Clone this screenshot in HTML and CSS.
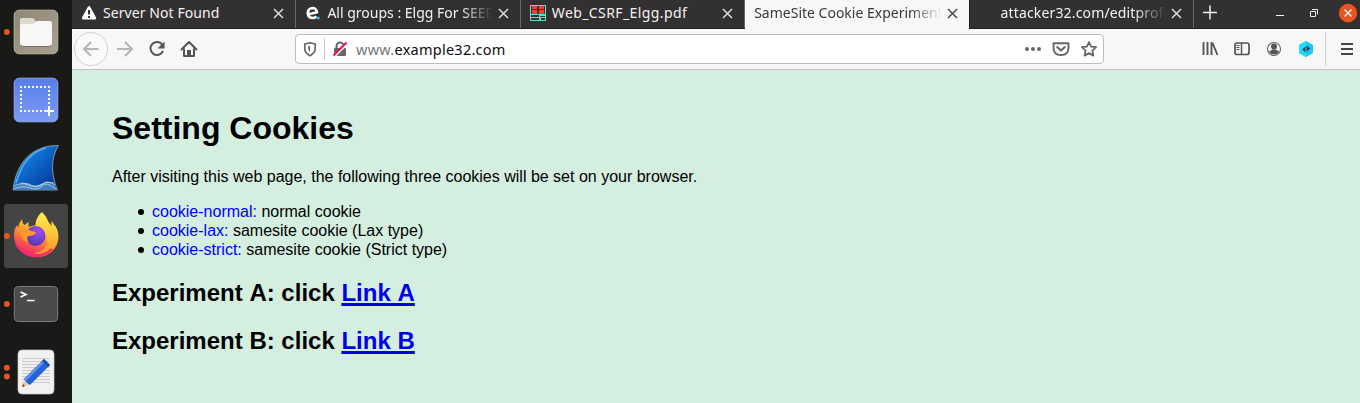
FILE: index.html
```html
<!DOCTYPE html>
<html lang="en">
<head>
<meta charset="utf-8">
<title>SameSite Cookie Experiment</title>
<link rel="stylesheet" href="styles.css">
</head>
<body>
<div class="desktop">
  <nav class="dock">
    <div class="app"><svg viewBox="0 0 64 64">
      <defs><linearGradient id="files" x1="0" y1="0" x2="1" y2="1"><stop offset="0" stop-color="#8f8776"/><stop offset="1" stop-color="#aaa290"/></linearGradient></defs>
      <rect x="10.2" y="10.2" width="43.6" height="43.6" rx="5" fill="url(#files)" stroke="#b9b4a6"/>
      <path d="M16 30V20q0-2 2-2h10q2 0 2.500 1.500l1 2H40v8z" fill="#dedad0"/>
      <path d="M16 26q0-2 2-2h10q2 0 3-1.500t3-1.500h12q2 0 2 2v20q0 3-3 3H19q-3 0-3-3z" fill="#f8f7f5"/>
      <path d="M17 45.500q1 1 2 1h26q1 0 2-1" fill="none" stroke="#777062"/>
      <circle cx="2.800" cy="32" r="3" fill="#e95420"/>
    </svg></div>
    <div class="app"><svg viewBox="0 0 64 64">
      <defs><linearGradient id="shot" x1="0" y1="0" x2="0" y2="1"><stop offset="0" stop-color="#587fe8"/><stop offset="1" stop-color="#7c9cf6"/></linearGradient></defs>
      <rect x="10.200" y="10.200" width="43.600" height="43.600" rx="5" fill="url(#shot)" stroke="#91a9ee"/>
      <path d="M16 19h30M17 22v22M16 43h24M45 22v16" fill="none" stroke="#fff" stroke-width="2" stroke-dasharray="2 2"/>
      <path d="M45 38v10M40 43h10" stroke="#fff" stroke-width="2"/>
    </svg></div>
    <div class="app"><svg viewBox="0 0 64 64">
      <defs><linearGradient id="fin" x1="0" y1="0" x2="1" y2="1"><stop offset=".2" stop-color="#1383e6"/><stop offset=".85" stop-color="#063b9b"/></linearGradient></defs>
      <path d="M9 54C12 27 28 9 54.500 9.500 47 21 46.500 38 53.500 54z" fill="url(#fin)" stroke="#92a9bd" stroke-width=".8"/>
      <path d="M12 47C17 29 26 16 42 12" fill="none" stroke="#54a9f4" stroke-width="1.600"/>
      <path d="M10 50q7-5 14-2t14 0 13 1l2 5H9z" fill="#427dbf"/>
      <path d="M10 50q7-4 14-1t14-1 13 1M10 53q8-4 16-1t12-2 14 3M17 47q8 0 12 3t13-4l8 1" fill="none" stroke="#bbd7ef" stroke-width=".8"/>
    </svg></div>
    <div class="app current"><svg viewBox="0 0 64 64">
      <defs>
        <linearGradient id="flame" x1=".8" y1="0" x2=".3" y2="1"><stop offset="0" stop-color="#fff44f"/><stop offset=".35" stop-color="#ffb42a"/><stop offset=".65" stop-color="#ff6540"/><stop offset="1" stop-color="#e8177d"/></linearGradient>
        <radialGradient id="globe" cx=".65" cy=".25" r=".8"><stop offset="0" stop-color="#a14df0"/><stop offset="1" stop-color="#5137ad"/></radialGradient>
        <linearGradient id="tail" x1=".5" y1="0" x2=".5" y2="1"><stop offset="0" stop-color="#fff150"/><stop offset="1" stop-color="#ff9528"/></linearGradient>
      </defs>
      <path d="M18.500 15q-1 4 2 6l4-3v5q10-4 15 1l12-2c8 14-1 31.500-19.500 31.500C20 53.500 10 44 10 31c0-4 1-7 3-10l1 3q1-6 4.500-9z" fill="url(#flame)"/>
      <path d="M38 8q5 5 6.500 10l3 4v-5c8 9 8 24-1 30-6 4-12 5-16 2 8-1 13-5 13-14-1-9-12-8-12-15 1-6 3-9 6.500-12z" fill="url(#tail)"/>
      <circle cx="31.500" cy="32" r="10" fill="url(#globe)"/>
      <path d="M16 27q7-4 11 0l5 1q-1 4-8 4-2 3 1 7-9-3-9-12z" fill="#ff9a2b"/>
      <path d="M12 40c7 13 25 15 36 5" fill="none" stroke="#f82a67" stroke-width="2"/>
      <circle cx="2.800" cy="32" r="3" fill="#e95420"/>
    </svg></div>
    <div class="app"><svg viewBox="0 0 64 64">
      <rect x="10.300" y="14.500" width="43.400" height="35" rx="4" fill="#4b4b4b" stroke="#797979"/>
      <path d="m16.500 20 5.500 2.500-5.500 2.500M23 28.500h7.500" fill="none" stroke="#fff" stroke-width="1.500"/>
      <circle cx="2.800" cy="32" r="3" fill="#e95420"/>
    </svg></div>
    <div class="app"><svg viewBox="0 0 64 64">
      <rect x="14" y="10" width="36" height="44" rx="4" fill="#f1f1f1" stroke="#c8c8c8" stroke-width=".7"/>
      <path d="M18 18.500h28M18 21.500h28M18 24.500h28M18 27.500h28M18 30.500h28M18 33.500h28M18 36.500h28M18 39.500h28M18 42.500h28" stroke="#cbcbcb"/>
      <path d="m18 47 2-7 5 5z" fill="#f3c9a7"/><path d="m18 47 1-3 2 2z" fill="#444"/>
      <path d="m20 39 20-20 6 6-20 20-3-2z" fill="#2763d7"/><path d="m20 39 20-20 2 2-20 20z" fill="#5b8df0"/><path d="m38 21 2-2 6 6-2 2z" fill="#194da8"/>
      <circle cx="2.800" cy="27.700" r="3" fill="#e95420"/><circle cx="2.800" cy="36.400" r="3" fill="#e95420"/>
    </svg></div>
  </nav>

  <div class="browser">
    <header class="tabbar">
      <div class="tab">
        <svg class="favicon" viewBox="0 0 16 16"><path d="M7 1.500q1-1 2 0l6 11q.5 2-1 2H2q-1.500 0-1-2z" fill="#fff"/><path d="M8 5v4.500M8 11v2" stroke="#333" stroke-width="2"/></svg>
        <span class="title t-server">Server Not Found</span>
        <svg class="close" viewBox="0 0 16 16"><path d="m4 4 9 9M13 4l-9 9"/></svg>
      </div>
      <div class="tab">
        <svg class="favicon" viewBox="0 0 16 16"><path d="M3.500 9.300 12 7.200Q11 3 7.500 3 3 3.500 2.800 8q.5 5 5 5 2 0 3.700-1.500" fill="none" stroke="#fff" stroke-width="2.700" stroke-linejoin="round"/><circle cx="13.300" cy="13" r="1.500" fill="#35b8e5"/></svg>
        <span class="title fade t-elgg">All groups : Elgg For SEED</span>
        <svg class="close" viewBox="0 0 16 16"><path d="m4 4 9 9M13 4l-9 9"/></svg>
      </div>
      <div class="tab">
        <svg class="favicon" viewBox="0 0 16 16"><path d="M0 0h16v16H0z" fill="#55e4c2"/><path d="M1 1h14v8H1zM1 10h8v2H1zM1 13h8v2H1z" fill="#393333"/><path d="M2 1h5v3H2zM9 1h5v3H9zM2 5h5v4H2zM9 5h5v4H9z" fill="#ef4132"/><path d="M10 11h5v1h-5zM11 13h4v2h-4z" fill="#333"/></svg>
        <span class="title t-pdf">Web_CSRF_Elgg.pdf</span>
        <svg class="close" viewBox="0 0 16 16"><path d="m4 4 9 9M13 4l-9 9"/></svg>
      </div>
      <div class="tab selected">
        <span class="title fade t-same">SameSite Cookie Experiment</span>
        <svg class="close" viewBox="0 0 16 16"><path d="m4 4 9 9M13 4l-9 9"/></svg>
      </div>
      <div class="tab">
        <span class="favicon"></span>
        <span class="title fade t-attack">attacker32.com/editprofile</span>
        <svg class="close" viewBox="0 0 16 16"><path d="m4 4 9 9M13 4l-9 9"/></svg>
      </div>
      <svg class="new-tab" viewBox="0 0 32 28"><path d="M9 12.500h14M16 5.500v14" stroke="#eee" stroke-width="1.500"/></svg>
      <svg class="window-controls" viewBox="0 0 100 28"><path d="M16 15.500h8" stroke="#fff"/><path d="M50.500 11.500h5v5h-5zM52 9.500h5.500v5" fill="none" stroke="#eee"/><circle cx="88" cy="13" r="9.200" fill="#e95420"/><path d="m84.500 9.500 7 7m0-7-7 7" stroke="#fff" stroke-width="1.400"/></svg>
    </header>

    <div class="toolbar">
      <div class="navigation">
        <svg class="back" viewBox="0 0 36 36"><circle cx="18" cy="18" r="16.500" fill="#fafafa" stroke="#d2d2d2"/><path d="M25.500 18H11m7-7-7 7 7 7" fill="none" stroke="#b5b5b5" stroke-width="2"/></svg>
        <svg class="nav-icon" viewBox="0 0 32 32"><path d="M8 16h15m-7-7 7 7-7 7" fill="none" stroke="#b5b5b5" stroke-width="2"/></svg>
        <svg class="nav-icon" viewBox="0 0 32 32"><path d="M21.500 12A6.500 6.500 0 1 0 22 18" fill="none" stroke="#555" stroke-width="2"/><path d="M23.500 8.500v7h-7z" fill="#555"/></svg>
        <svg class="nav-icon" viewBox="0 0 32 32"><path d="m8.500 16.500 7.500-7.500 7.500 7.500M11 16v7h10v-7" fill="none" stroke="#555" stroke-width="2" stroke-linecap="round" stroke-linejoin="round"/><path d="M14 23v-6h4v6z" fill="#555"/></svg>
      </div>
      <div class="address">
        <svg class="shield" viewBox="0 0 16 16"><path d="M8 1.700 13.200 3V8q0 3.800-5.200 6.700Q2.800 11.800 2.800 8V3z" fill="none" stroke="#666" stroke-width="1.700" stroke-linejoin="round"/><path d="M8 5v6q-2-1.500-2-4V5.500z" fill="#666"/></svg>
        <span class="address-rule"></span>
        <svg class="lock" viewBox="0 0 16 16"><path d="M4.500 7V5a3.500 3.500 0 0 1 7 0v2" fill="none" stroke="#666" stroke-width="2"/><rect x="2" y="7" width="12" height="8" rx="1" fill="#666"/><path d="M2.500 15.500 15.500 2.500" stroke="#fff" stroke-width="2"/><path d="M1.500 14.500 14.500 1.500" stroke="#f0134d" stroke-width="2"/></svg>
        <span class="url"><span class="subdomain">www.</span>example32.com</span>
        <svg class="action" viewBox="0 0 28 28"><circle cx="8" cy="14" r="2"/><circle cx="14" cy="14" r="2"/><circle cx="20" cy="14" r="2"/></svg>
        <svg class="action" viewBox="0 0 28 28"><path d="M6.500 8.200h15V13q0 7-7.500 7t-7.500-7z" fill="none" stroke="#666" stroke-width="1.900" stroke-linejoin="round"/><path d="m10.200 12 3.800 3.600 3.800-3.600" fill="none" stroke="#666" stroke-width="2" stroke-linecap="round" stroke-linejoin="round"/></svg>
        <svg class="action" viewBox="0 0 28 28"><path d="m14 7 2.100 4.600 5 .600-3.700 3.400 1 5-4.400-2.500-4.400 2.500 1-5L6.900 12.200l5-.600z" fill="none" stroke="#666" stroke-width="1.800" stroke-linejoin="round"/></svg>
      </div>
      <div class="tools">
        <svg class="nav-icon" viewBox="0 0 32 32"><path d="M9.500 9v13M13.500 9v13M17.500 9v13M18.500 10l5 12" stroke="#555" stroke-width="1.900"/></svg>
        <svg class="nav-icon" viewBox="0 0 32 32"><rect x="9" y="10" width="14" height="11.500" rx="2" fill="none" stroke="#555" stroke-width="1.700"/><path d="M15.500 10v12" stroke="#555" stroke-width="1.500"/><path d="M10.500 12.500h3m-3 2h3m-3 2h3" stroke="#555"/></svg>
        <svg class="nav-icon" viewBox="0 0 32 32"><circle cx="16" cy="16" r="6.500" fill="none" stroke="#666" stroke-width="1.100"/><circle cx="16" cy="13.500" r="3" fill="#555"/><path d="M11 18q2 0 3-1.500h4Q19 18 21 18q-1 3.500-5 3.500T11 18z" fill="#555"/></svg>
        <svg class="nav-icon" viewBox="0 0 32 32"><path d="m16 8 7 4v8l-7 4-7-4v-8z" fill="#17c9f5"/><path d="m9 12 7-4v16l-7-4z" fill="#26dcfa"/><path d="m12 16.500 3.500-3v6zM16.500 12.500l4 3-4 3z" fill="#26445c"/></svg>
        <span class="menu-rule"></span>
        <svg class="menu" viewBox="0 0 26 32"><path d="M7 11h12M7 16h12M7 21h12" stroke="#444" stroke-width="1.800"/></svg>
      </div>
    </div>

    <main class="page">
      <h1>Setting Cookies</h1>
      <p>After visiting this web page, the following three cookies will be set on your browser.</p>
      <ul>
        <li><span class="cookie">cookie-normal:</span> normal cookie</li>
        <li><span class="cookie">cookie-lax:</span> samesite cookie (Lax type)</li>
        <li><span class="cookie">cookie-strict:</span> samesite cookie (Strict type)</li>
      </ul>
      <h2>Experiment A: click <a href="#a">Link A</a></h2>
      <h2>Experiment B: click <a href="#b">Link B</a></h2>
    </main>
  </div>
</div>
</body>
</html>
```

FILE: styles.css
```css
* { box-sizing: border-box; }
body { margin: 0; overflow: hidden; font-family: "Liberation Sans", Arial, sans-serif; }
svg { display: block; flex: none; }
.desktop { display: flex; width: 1360px; height: 403px; overflow: hidden; }
.dock { display: flex; flex: none; flex-direction: column; gap: 4px; width: 72px; padding-left: 4px; background: #191917; }
.app { flex: none; width: 64px; height: 64px; border-radius: 3px; }
.app svg { width: 64px; height: 64px; }
.app.current { background: #444443; }
.browser { display: flex; flex: 1; flex-direction: column; min-width: 0; }

.tabbar { display: flex; flex: none; height: 29px; background: #333031; color: #f3f2f1; border-bottom: 1px solid #211f20; font: 14px/26px "Noto Sans", sans-serif; }
.tab { display: flex; flex: none; align-items: center; width: 224.4px; height: 28px; padding: 0 9px 2px 9px; border-right: 1px solid #68666a; }
.tab.selected { height: 29px; padding-bottom: 3px; border-color: #211f20; background: #f7f7f7; color: #39393d; }
.favicon { flex: none; width: 16px; height: 16px; margin-right: 6px; }
.title { flex: 1; min-width: 0; overflow: hidden; white-space: nowrap; }
.t-server { letter-spacing: .08px; }
.t-pdf { letter-spacing: .4px; }
.t-attack { letter-spacing: .15px; }
.fade { mask-image: linear-gradient(to right, #000 calc(100% - 32px), transparent 100%); }
.close { width: 16px; height: 16px; margin-left: 2px; fill: none; stroke: #deddda; stroke-width: 1.5; }
.selected .close { stroke: #4a4a4d; }
.new-tab { width: 32px; height: 28px; }
.window-controls { width: 100px; height: 28px; margin-left: auto; }

.toolbar { display: flex; flex: none; align-items: center; height: 41px; background: #f7f7f7; border-bottom: 1px solid #bfc2c0; }
.navigation { display: flex; align-items: center; width: 223px; padding-left: 1px; }
.back { width: 36px; height: 36px; }
.nav-icon { width: 32px; height: 32px; }
.address { display: flex; align-items: center; width: 809px; height: 30px; padding: 0 0 0 6px; border: 1px solid #bdbdbd; border-radius: 4px; background: #fff; }
.shield, .lock { width: 16px; height: 16px; }
.address-rule { width: 1px; height: 22px; margin: 0 7px 0 6px; background: #c8c8c8; }
.url { flex: 1; margin-left: 8px; font: 14.5px/24px "Noto Sans", sans-serif; letter-spacing: .25px; color: #0c0c0d; }
.subdomain { color: #77777a; }
.action { width: 28px; height: 28px; fill: #666; }
.tools { display: flex; align-items: center; margin-left: auto; }
.menu-rule { width: 1px; height: 34px; margin: 0 8px 0 3px; background: #d3d3d3; }
.menu { width: 26px; height: 32px; }

.page { flex: 1; padding: 40px 40px 0; background: #d4eedf; color: #000; font-size: 16px; line-height: 19px; }
h1 { margin: 0 0 20px; font-size: 32px; line-height: 37px; }
p { margin: 0 0 16px; }
ul { margin: 0 0 20px; padding-left: 40px; list-style: none; }
li::before { content: ""; display: inline-block; width: 6px; height: 6px; margin: 0 8px 0 -14px; border-radius: 50%; background: #000; vertical-align: 2px; }
.cookie { color: #00f; }
h2 { margin: 0 0 20px; font-size: 24px; line-height: 28px; font-kerning: none; }
h2 a { color: #00e; text-decoration-thickness: 3px; text-underline-offset: 2px; text-decoration-skip-ink: none; }
```
